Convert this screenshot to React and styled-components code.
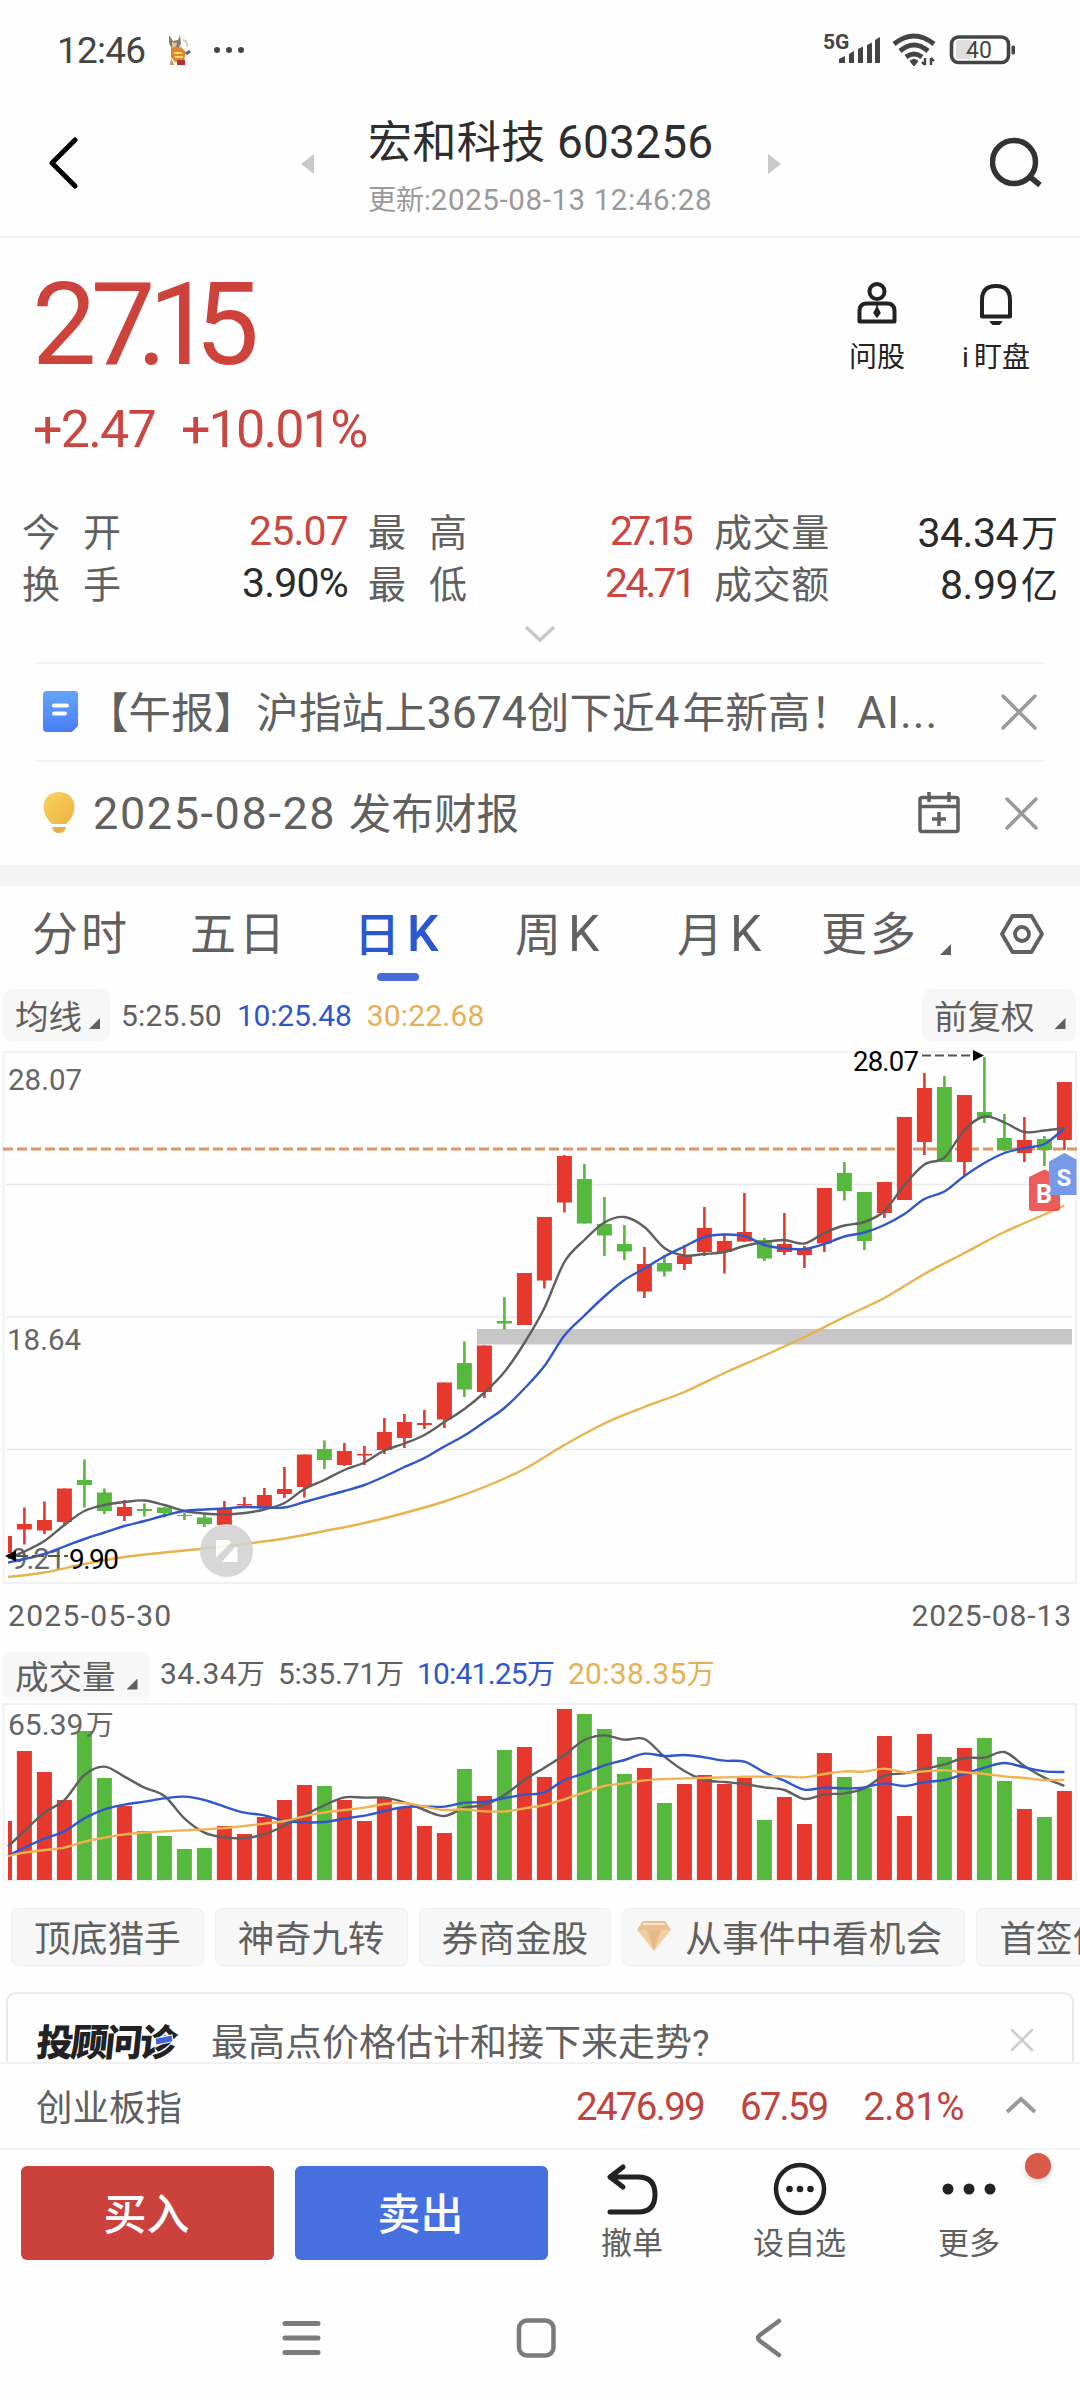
import React from 'react';
import styled, { createGlobalStyle } from 'styled-components';

const RED = '#e6382c';
const GREEN = '#56b83c';

const GlobalStyle = createGlobalStyle`
  * {
    box-sizing: border-box;
  }

  body {
    margin: 0;
    background: #ffffff;
    font-family: Roboto, 'Noto Sans CJK SC', sans-serif;
    color: #606060;
  }

  svg {
    display: block;
    flex: none;
  }
`;

// Layout
const Screen = styled.div`
  width: 1080px;
  height: 2400px;
  background: #fefefe;
  display: flex;
  flex-direction: column;
  overflow: hidden;
  white-space: nowrap;

  > * {
    flex: none;
  }
`;

const Row = styled.div`
  display: flex;
  align-items: center;
`;

const Num = styled.span`
  font-size: ${(p) => p.$size}px;
  letter-spacing: ${(p) => p.$ls || 0}px;
  color: ${(p) => p.$color || 'inherit'};
  margin: 0 ${(p) => p.$after || 0}px 0 ${(p) => p.$before || 0}px;
`;

// Status bar
const StatusBar = styled(Row)`
  height: 100px;
  padding: 0 64px 0 57px;
  justify-content: space-between;
  color: #444444;
`;

const StatusSide = styled(Row)`
  gap: ${(p) => p.$gap}px;
`;

// Title bar
const TitleBar = styled.header`
  height: 138px;
  padding: 0 36px 8px 48px;
  display: flex;
  align-items: center;
  justify-content: space-between;
  border-bottom: 2px solid #f3f3f3;
`;

const TitleCenter = styled(Row)`
  width: 480px;
  margin-left: 12px;
  justify-content: space-between;
`;

const TitleText = styled.div`
  display: flex;
  flex-direction: column;
  width: 346px;
  padding-top: 1px;
`;

const StockName = styled.h1`
  margin: 0;
  font-size: 44px;
  line-height: 60px;
  font-weight: 400;
  letter-spacing: 0.4px;
  color: #2e2e2e;
`;

const Updated = styled.div`
  font-size: 28px;
  line-height: 40px;
  margin-top: 7px;
  margin-bottom: -4px;
  color: #999999;
`;

// Quote
const Quote = styled.section`
  height: 424px;
`;

const QuoteTop = styled.div`
  display: flex;
  justify-content: space-between;
  padding: 0 51px 0 32px;
  height: 262px;
`;

const Price = styled.div`
  font-size: 115px;
  line-height: 120px;
  margin-top: 27px;
  letter-spacing: -6px;
  color: #ce423c;

  span {
    letter-spacing: -18.5px;
  }
`;

const Change = styled.div`
  display: flex;
  gap: 26px;
  margin-top: 15px;
  font-size: 52px;
  line-height: 60px;
  letter-spacing: -1.8px;
  padding-left: 1px;
  color: #c94641;
`;

const QuoteActions = styled.div`
  display: flex;
  gap: 53px;
  padding-top: 43px;
`;

const QuoteAction = styled.div`
  display: flex;
  flex-direction: column;
  align-items: center;
  font-size: 28px;
  line-height: 34px;
  color: #222222;
  width: 66px;

  svg {
    margin-bottom: 16px;
  }

  em {
    font-style: normal;
    margin-right: 5px;
  }
`;

const Stats = styled.div`
  display: grid;
  grid-template-columns: 325px 346px 365px;
  grid-auto-rows: 52px;
  padding: 5px 22px 0;
`;

const Stat = styled.div`
  display: flex;
  justify-content: space-between;
  align-items: center;
  padding-left: ${(p) => p.$indent || 0}px;
`;

const StatLabel = styled.span`
  font-size: 38px;
  padding-bottom: 4px;
  letter-spacing: ${(p) => (p.$spread ? 23 : 0.6)}px;
`;

const StatValue = styled.span`
  font-size: 41px;
  letter-spacing: ${(p) => p.$ls || -0.8}px;
  margin-right: ${(p) => p.$shift || 0}px;
  color: ${(p) => (p.$up ? '#c94641' : '#2b2b2b')};

  small {
    font-size: 37px;
    letter-spacing: 0;
    margin-left: 3px;
  }
`;

const ExpandMark = styled.div`
  display: flex;
  justify-content: center;
  padding-top: 16px;
`;

// Notices
const Notice = styled.div`
  display: flex;
  align-items: center;
  height: ${(p) => p.$h}px;
  margin: 0 36px;
  border-top: 2px solid #f2f2f2;
  padding: 0 ${(p) => p.$right}px ${(p) => p.$bottom || 0}px 7px;
  font-size: 42.6px;
`;

const NoticeText = styled.div`
  flex: 1;
  margin-left: ${(p) => p.$left}px;
  padding-bottom: 5px;
`;

const CalendarIcon = styled.svg`
  margin-right: 44px;
`;

const Band = styled.div`
  height: 21px;
  background: #f4f4f4;
`;

// Period tabs
const Tabs = styled.nav`
  display: flex;
  height: 102px;
  padding: 0 35px 0 32px;
  font-size: 46px;
`;

const Tab = styled.div`
  width: ${(p) => p.$w}px;
  padding-top: 18px;
  line-height: 60px;
  letter-spacing: 3px;
  font-weight: ${(p) => (p.$active ? 500 : 400)};
  color: ${(p) => (p.$active ? '#2b57cf' : '#606060')};

  b {
    font-size: 50px;
    font-weight: inherit;
    margin-left: 4px;
  }

  &::after {
    content: '';
    display: ${(p) => (p.$active ? 'block' : 'none')};
    width: 42px;
    height: 8px;
    margin: 8px 0 0 23px;
    border-radius: 4px;
    background: #476ddb;
  }

  i {
    margin-bottom: -5px;
  }
`;

const Corner = styled.i`
  display: inline-block;
  width: 11px;
  height: 11px;
  margin-left: ${(p) => p.$left}px;
  background: #606060;
  clip-path: polygon(100% 0, 100% 100%, 0 100%);
`;

const TabSettings = styled.div`
  margin-left: auto;
  padding-top: 27px;
`;

// Indicator bars
const IndicatorBar = styled.div`
  display: flex;
  align-items: center;
  height: ${(p) => p.$h}px;
  padding: 0 4px 0 3px;
`;

const Picker = styled.div`
  display: flex;
  align-items: center;
  width: ${(p) => p.$w}px;
  height: ${(p) => p.$h}px;
  padding: 0 0 2px 12px;
  border-radius: 9px;
  background: #f7f7f7;
  font-size: 33.5px;

  i {
    margin-top: 19px;
  }
`;

const Legend = styled.div`
  flex: 1;
  display: flex;
  gap: ${(p) => p.$gap}px;
  margin-left: 11px;
  font-size: 28px;
  padding-bottom: ${(p) => p.$up || 0}px;
`;

const LegendItem = styled.span`
  color: ${(p) => p.$color || 'inherit'};
`;

const Dates = styled.div`
  display: flex;
  justify-content: space-between;
  align-items: center;
  height: 65px;
  padding: 0 8px 2px;
`;

// Feature chips
const Chips = styled.div`
  display: flex;
  gap: 11px;
  padding: 26px 0 0 11px;
  height: 110px;
`;

const Chip = styled.div`
  flex: none;
  display: flex;
  align-items: center;
  height: 58px;
  padding: 0 22px 3px ${(p) => (p.$icon ? 14 : 22)}px;
  border: 1px solid #f0f0f0;
  border-radius: 7px;
  background: #f7f7f7;
  font-size: 36.7px;

  svg {
    margin-right: 14px;
  }
`;

const AdvisorClip = styled.div`
  height: 70px;
  padding: 0 6px;
  overflow: hidden;
`;

const Advisor = styled.div`
  display: flex;
  align-items: center;
  height: 96px;
  padding: 0 38px 0 29px;
  border: 2px solid #e9e9e9;
  border-radius: 10px;
  font-size: 37px;
`;

const AdvisorLogo = styled.span`
  display: inline-block;
  width: 140px;
  margin-right: 34px;
  font-size: 37px;
  font-weight: 900;
  letter-spacing: -2.6px;
  color: #222222;
  transform: skewX(-6deg);
  position: relative;

  &::after {
    content: '';
    position: absolute;
    right: 5px;
    top: 24px;
    width: 16px;
    height: 6px;
    background: #3f63d8;
    box-shadow: 0 0 0 1px #fefefe;
    transform: rotate(-12deg);
  }
`;

const AdvisorText = styled.span`
  flex: 1;
`;

const IndexBar = styled.div`
  display: flex;
  align-items: center;
  height: 88px;
  padding: 0 43px 2px 36px;
  border-top: 2px solid #f1f1f1;
  border-bottom: 2px solid #f5f5f5;
  font-size: 36.5px;
`;

const IndexValues = styled.div`
  margin-left: auto;
  margin-right: 41px;
  padding-top: 2px;
  display: flex;
  gap: 36px;
  color: #bf4440;
`;

// Trade bar
const TradeBar = styled.div`
  display: flex;
  height: 112px;
  padding: 16px 0 0 21px;
`;

const TradeButton = styled.button`
  width: 253px;
  height: 94px;
  margin-right: 21px;
  border: none;
  border-radius: 6px;
  background: ${(p) => p.$bg};
  color: #ffffff;
  font-family: inherit;
  font-size: 43px;
  font-weight: 500;
  padding: 0 2px 5px 0;
`;

const TradeAction = styled.div`
  display: flex;
  flex-direction: column;
  align-items: center;
  width: ${(p) => p.$w}px;
  position: relative;
  font-size: 31px;
  line-height: 36px;

  svg {
    margin: -5px 0 5px;
  }
`;

const Badge = styled.span`
  position: absolute;
  right: -17px;
  top: -13px;
  width: 26px;
  height: 26px;
  border-radius: 50%;
  background: #d85a4a;
  box-shadow: 0 3px 5px rgba(0, 0, 0, 0.15);
`;

const SystemNav = styled.div`
  display: flex;
  align-items: center;
  gap: 194px;
  height: 138px;
  padding: 14px 0 0 281px;
`;

// color, body top, body bottom, high, low (px in the chart's own space)
const candles = [
  ['r', 1536, 1553, 1536, 1553],
  ['r', 1524, 1529.5, 1507.5, 1544.5],
  ['r', 1520, 1530.5, 1501.5, 1534],
  ['r', 1488.5, 1522, 1488.5, 1526],
  ['g', 1480, 1485, 1459.5, 1507.5],
  ['g', 1492.5, 1511, 1488.5, 1514],
  ['r', 1507, 1516, 1500, 1521],
  ['g', 1509, 1511, 1503.5, 1516.5],
  ['g', 1507.5, 1513, 1507, 1517.5],
  ['g', 1515, 1516, 1513, 1520],
  ['g', 1517.5, 1524, 1513, 1527],
  ['r', 1508, 1525, 1501, 1525],
  ['r', 1504, 1505.5, 1497, 1507],
  ['r', 1495, 1507, 1488, 1507],
  ['r', 1489, 1494, 1467, 1498],
  ['r', 1454.5, 1487, 1454.5, 1497.5],
  ['g', 1449, 1460, 1440.5, 1469],
  ['r', 1451, 1465, 1443, 1466],
  ['r', 1454, 1455.5, 1446, 1465],
  ['r', 1432, 1450, 1418, 1454],
  ['r', 1422, 1438, 1414, 1448],
  ['r', 1423, 1425, 1410, 1429],
  ['r', 1382.5, 1419.5, 1382.5, 1428],
  ['g', 1363, 1389.5, 1341.5, 1397],
  ['r', 1345.5, 1392, 1345.5, 1398],
  ['g', 1321, 1323.5, 1297, 1329.5],
  ['r', 1273, 1325, 1273, 1325],
  ['r', 1217, 1280.5, 1217, 1288.5],
  ['r', 1156, 1202.5, 1155, 1212.5],
  ['g', 1179, 1223.5, 1164, 1223.5],
  ['g', 1224, 1235.5, 1197, 1256],
  ['g', 1244, 1251.5, 1225, 1260],
  ['r', 1264, 1291.5, 1247, 1298],
  ['g', 1263, 1271.5, 1255, 1276.5],
  ['r', 1255.5, 1264, 1245, 1270],
  ['r', 1228, 1252, 1207, 1256],
  ['r', 1241, 1252, 1235, 1273.5],
  ['r', 1232, 1241.5, 1193, 1242],
  ['g', 1240, 1258.5, 1238, 1261],
  ['r', 1244, 1252, 1213, 1255],
  ['r', 1248, 1255, 1246, 1268],
  ['r', 1188, 1243.5, 1188, 1252],
  ['g', 1173, 1191, 1162, 1200.5],
  ['g', 1192, 1241, 1192, 1250],
  ['r', 1182, 1213, 1182, 1218],
  ['r', 1117, 1200, 1117, 1200],
  ['r', 1088, 1142, 1073, 1155],
  ['g', 1087, 1162, 1076, 1162],
  ['r', 1095, 1162, 1095, 1176],
  ['g', 1112, 1118, 1057, 1123],
  ['g', 1138, 1150, 1114, 1151],
  ['r', 1140, 1153, 1117, 1162],
  ['g', 1139, 1150, 1136, 1166],
  ['r', 1082, 1140, 1082, 1150],
];

const volumeTops = [
  1821, 1751, 1772, 1800, 1731, 1778, 1806, 1831, 1836, 1849, 1848, 1826, 1834, 1817,
  1800, 1785, 1786, 1800, 1821, 1798, 1808, 1826, 1833, 1769, 1796, 1750, 1747, 1777,
  1709, 1714, 1729, 1774, 1768, 1803, 1784, 1775, 1784, 1778, 1820, 1797, 1824, 1753,
  1777, 1788, 1736, 1816, 1734, 1757, 1748, 1738, 1781, 1809, 1817, 1791,
];

const ma5 = [
  1558, 1551.5, 1541, 1525, 1511, 1505, 1502, 1500.5, 1505, 1511, 1513.5, 1514.5, 1513,
  1509.5, 1503, 1489, 1480, 1470, 1462.5, 1450.5, 1443.5, 1435, 1422, 1409, 1392.5, 1372,
  1343, 1308, 1262, 1240, 1222.5, 1217, 1227, 1248, 1255.5, 1254, 1252, 1246, 1242, 1240,
  1243.5, 1233, 1225.5, 1222, 1211, 1185, 1164.5, 1157.5, 1130, 1116.5, 1122.5, 1132, 1130.5, 1128,
];

const ma10 = [
  1562.5, 1559, 1554, 1546.5, 1539, 1532.5, 1526, 1521, 1515.5, 1511, 1509.5, 1508.5, 1507,
  1507.5, 1507.5, 1502, 1496.5, 1491, 1485, 1476.5, 1467, 1458, 1446.5, 1435.5, 1422, 1408,
  1388.5, 1366, 1335.5, 1315.5, 1296.5, 1280, 1268.5, 1256.5, 1246.5, 1237, 1234.5, 1236, 1245,
  1248.5, 1249, 1244, 1236.5, 1232.5, 1225, 1214, 1199, 1191.5, 1176, 1163, 1153, 1148, 1144, 1128.5,
];

// sampled on every second day, the latest day is appended in the chart
const ma30 = [
  1577, 1572.5, 1564, 1557, 1552.5, 1548.5, 1544, 1538.5, 1531, 1523, 1513, 1501.5, 1487, 1469,
  1445, 1423.5, 1407, 1392, 1373, 1355.5, 1337, 1317, 1298, 1274, 1253, 1232, 1214.5,
];

const vol5 = [
  620, 573, 518, 480, 405, 380, 410, 443, 468, 535, 578, 592, 594, 583, 557, 525, 496, 472, 473,
  473, 487, 510, 528, 503, 495, 465, 420, 383, 345, 300, 286, 299, 297, 350, 393, 420, 426, 432,
  442, 450, 477, 463, 460, 445, 407, 400, 387, 373, 354, 353, 336, 378, 413, 438,
];

const vol10 = [
  648, 623, 596, 574, 535, 508, 494, 485, 475, 470, 480, 500, 518, 526, 543, 547, 546, 536, 527,
  513, 501, 500, 500, 488, 486, 474, 464, 457, 420, 400, 376, 360, 341, 348, 345, 352, 362, 365,
  397, 422, 449, 443, 445, 442, 430, 438, 426, 420, 402, 383, 369, 382, 394, 396,
];

const vol20 = [
  648, 638, 630, 623, 605, 593, 583, 578, 574, 571, 568, 564, 558, 551, 543, 529, 517, 510, 503,
  492, 489, 500, 510, 508, 514, 514, 505, 495, 478, 457, 438, 430, 421, 417, 415, 414, 412, 410,
  410, 409, 412, 402, 394, 395, 386, 397, 394, 391, 397, 402, 409, 414, 420, 420,
];

const xAt = (i) => (i === 0 ? 8 : 4.4 + 20 * i);
const toPoints = (values) => values.map((y, i) => [xAt(i), y]);
const volPoints = (values) => values.map((v, i) => [xAt(i), 1640 + v / 3]);

// Catmull-Rom curve through all the points
const smooth = (pts) => {
  let d = `M${pts[0][0]} ${pts[0][1]}`;
  for (let i = 0; i < pts.length - 1; i += 1) {
    const p0 = pts[i - 1] || pts[i];
    const p1 = pts[i];
    const p2 = pts[i + 1];
    const p3 = pts[i + 2] || p2;
    d += ` C${p1[0] + (p2[0] - p0[0]) / 6} ${p1[1] + (p2[1] - p0[1]) / 6}`;
    d += ` ${p2[0] - (p3[0] - p1[0]) / 6} ${p2[1] - (p3[1] - p1[1]) / 6} ${p2[0]} ${p2[1]}`;
  }
  return d;
};

const Line = styled.path`
  fill: none;
  stroke: ${(p) => p.$color};
  stroke-width: 2.4px;
`;

const ChartText = styled.text`
  font-size: ${(p) => p.$size || 29.5}px;
  letter-spacing: ${(p) => p.$ls || 0}px;
  font-weight: ${(p) => (p.$bold ? 700 : 400)};
  fill: ${(p) => p.$color || '#666666'};
`;

const fill = (c) => (c === 'r' ? RED : GREEN);

const CandleChart = () => {
  const ma30Points = ma30.map((y, i) => [xAt(i * 2), y]).concat([[1064.4, 1205.5]]);
  return (
    <svg width="1080" height="542" viewBox="0 1042 1080 542">
      <rect x="3.5" y="1052" width="1072.5" height="531" fill="none" stroke="#f1f1f1" strokeWidth="2" />
      {[1184.5, 1317, 1449.5].map((y) => (
        <line key={y} x1="6" x2="1072" y1={y} y2={y} stroke="#e9e9e9" strokeWidth="1.4" />
      ))}
      <ChartText x="8" y="1090">28.07</ChartText>
      <ChartText x="7" y="1350">18.64</ChartText>
      <ChartText x="11" y="1569" $ls={-1}>9.21</ChartText>
      <line x1="3" x2="1077" y1="1149" y2="1149" stroke="#dc9468" strokeWidth="3" strokeDasharray="10 4" />
      <rect x="477" y="1329" width="595" height="15.5" fill="#c6c6c6" />
      {candles.map(([c, top, bottom, high, low], i) =>
        i === 0 ? (
          <rect key={i} x="8" y={top} width="4" height={bottom - top} fill={fill(c)} />
        ) : (
          <g key={i} fill={fill(c)}>
            <rect x={xAt(i) - 1.3} y={high} width="2.6" height={low - high} />
            <rect x={xAt(i) - 7.5} y={top} width="15" height={bottom - top} />
          </g>
        )
      )}
      <Line $color="#5f5f5f" d={smooth(toPoints(ma5))} />
      <Line $color="#2f57c9" d={smooth(toPoints(ma10))} />
      <Line $color="#e8b34c" d={smooth(ma30Points)} />
      <path d="M5 1556l11-5.5v11z" fill="#000000" />
      <line x1="16" x2="68" y1="1556" y2="1556" stroke="#555555" strokeWidth="2" strokeDasharray="12 4" />
      <ChartText x="69" y="1569" $size={28} $ls={-1.5} $color="#000000">9.90</ChartText>
      <ChartText x="853" y="1070.5" $size={27.5} $ls={-0.8} $color="#000000">28.07</ChartText>
      <line x1="922" x2="972" y1="1055.5" y2="1055.5" stroke="#555555" strokeWidth="2" strokeDasharray="9 4" />
      <path d="M984 1055.5l-11-5.5v11z" fill="#000000" />
      <g opacity="0.88">
        <circle cx="226.6" cy="1550.5" r="26.5" fill="#d2d2d2" />
        <path d="M216 1540h13l2 2.5-15 15z M237.5 1562v-14l-2-1.5-13.5 15.5z" fill="#ffffff" />
      </g>
      <g opacity="0.88">
        <path d="M1029 1177l15.5-7.5 15.5 7.5v31q0 3-3 3h-25q-3 0-3-3z" fill="#ea4646" />
        <path d="M1049 1161.5l15.5-8.5 12 6.5v35.5h-27.5z" fill="#648ce6" />
      </g>
      <ChartText x="1036" y="1202.5" $size={25} $color="#ffffff" $bold>B</ChartText>
      <ChartText x="1056.5" y="1185.5" $size={24} $color="#ffffff" $bold>S</ChartText>
    </svg>
  );
};

const VolumeChart = () => (
  <svg width="1080" height="180" viewBox="0 1702 1080 180">
    <path d="M3.5 1880V1704H1076V1880z" fill="none" stroke="#f1f1f1" strokeWidth="2" />
    {volumeTops.map((top, i) => (
      <rect
        key={i}
        x={i === 0 ? 8 : xAt(i) - 7.5}
        y={top}
        width={i === 0 ? 4 : 15}
        height={1880 - top}
        fill={fill(candles[i][0])}
      />
    ))}
    <Line $color="#5f5f5f" d={smooth(volPoints(vol5))} />
    <Line $color="#2f57c9" d={smooth(volPoints(vol10))} />
    <Line $color="#f0b350" d={smooth(volPoints(vol20))} />
    <ChartText x="8" y="1735" $size={30}>
      65.39<tspan fontSize="28" dx="2.5">万</tspan>
    </ChartText>
  </svg>
);

const CloseIcon = ({ size, color, width = 3.5 }) => (
  <svg width={size} height={size} viewBox={`0 0 ${size} ${size}`} stroke={color} strokeWidth={width} strokeLinecap="round">
    <path d={`M2 2L${size - 2} ${size - 2}M${size - 2} 2L2 ${size - 2}`} />
  </svg>
);

const App = () => (
  <>
    <GlobalStyle />
    <Screen>
      <StatusBar>
        <StatusSide $gap={21}>
          <Num $size={37} $ls={-0.8}>12:46</Num>
          <svg width="26" height="32" viewBox="0 0 26 32">
            <path d="M3 1l4 6 5-1 2-5 1 9-3 5H6L3 9z" fill="#8b7a68" />
            <path d="M6 8l5 1-1 4-4 1z" fill="#dcc0a0" />
            <path d="M5 14l10-1 5 5-2 9-9 1-4-5z" fill="#dd852f" />
            <path d="M8 19h8M9 23h8" stroke="#f8dc6a" strokeWidth="2" />
            <path d="M11 26h8v5h-8z" fill="#b8322a" />
            <path d="M5 24l3 7H4z" fill="#c69045" />
            <path d="M17 6q5 1 4 7" fill="none" stroke="#d9c9bb" strokeWidth="2" />
            <path d="M20 20l4-3" stroke="#59688a" strokeWidth="3" />
          </svg>
          <svg width="32" height="8" viewBox="0 0 32 8" fill="#444444">
            <circle cx="4" cy="4" r="3" />
            <circle cx="16" cy="4" r="3" />
            <circle cx="28" cy="4" r="3" />
          </svg>
        </StatusSide>
        <svg width="194" height="40" viewBox="822 30 194 40">
          <text x="823" y="48.5" fontSize="21" fontWeight="700" fill="#444444">5G</text>
          <g fill="#444444">
            <path d="M839 63v-4l6-3v7z M849 63v-9l5-3v12z M858 63v-14l5-2.5v16.5z M867 63v-18l5-2.5v20.5z M875 63v-23l5-3v26z" />
          </g>
          <g fill="none" stroke="#444444" strokeWidth="5">
            <path d="M894 44q20-16 40 0" />
            <path d="M900 51q14-12 28 0" />
            <path d="M906 57q8-6 16 0" />
          </g>
          <path d="M914 59l4 2-4 5-4-5z" fill="#444444" stroke="#444444" />
          <path d="M925 65v-7m0 7l-3-3M931 58v7m0-7l3 3" stroke="#444444" strokeWidth="2.4" />
          <rect x="951.5" y="37" width="57" height="25.5" rx="7" fill="none" stroke="#444444" strokeWidth="3.6" />
          <rect x="956" y="40" width="16" height="19" rx="3" fill="#dedede" />
          <rect x="1011.5" y="45.5" width="3.5" height="9" rx="1.5" fill="#444444" />
          <text x="966" y="57.5" fontSize="23" fill="#444444">40</text>
        </svg>
      </StatusBar>

      <TitleBar>
        <svg width="32" height="54" viewBox="0 1 32 54" fill="none" stroke="#000000" strokeWidth="5" strokeLinecap="round" strokeLinejoin="round">
          <path d="M27 4L4 27L27 50" />
        </svg>
        <TitleCenter>
          <svg width="14" height="20" viewBox="0 0 14 20" fill="#c9c9c9">
            <path d="M13 0v20L0 10z" />
          </svg>
          <TitleText>
            <StockName>
              宏和科技 <Num $size={46} $ls={0.2}>603256</Num>
            </StockName>
            <Updated>
              更新:<Num $size={29.5} $ls={0.6}>2025-08-13 12:46:28</Num>
            </Updated>
          </TitleText>
          <svg width="14" height="20" viewBox="0 0 14 20" fill="#c9c9c9">
            <path d="M1 0v20L14 10z" />
          </svg>
        </TitleCenter>
        <svg width="54" height="54" viewBox="0 0 54 54" fill="none" stroke="#333333" strokeWidth="5.5">
          <circle cx="24" cy="25" r="21.5" />
          <path d="M40 40l10 8" />
        </svg>
      </TitleBar>

      <Quote>
        <QuoteTop>
          <div>
            <Price>
              2<span>7.1</span>5
            </Price>
            <Change>
              <span>+2.47</span>
              <span>+10.01%</span>
            </Change>
          </div>
          <QuoteActions>
            <QuoteAction>
              <svg width="42" height="44" viewBox="0 0 42 44" fill="none" stroke="#222222" strokeWidth="4">
                <circle cx="21" cy="10.5" r="7.5" />
                <path d="M3.5 40.5V30q0-7.5 7.5-7.5h20q7.5 0 7.5 7.5v10.5z" strokeLinejoin="round" />
                <path d="M21 22v4l3 6-3 4-3-4 3-6" fill="#222222" strokeWidth="1.5" />
              </svg>
              问股
            </QuoteAction>
            <QuoteAction>
              <svg width="42" height="44" viewBox="0 0 42 44" fill="none" stroke="#222222" strokeWidth="4">
                <path d="M7 35.5V19Q7 5 21 5t14 14v16.5z" strokeLinejoin="round" />
                <path d="M14.5 40h13q-2 5-6.5 5t-6.5-5z" fill="#222222" stroke="none" />
              </svg>
              <span>
                <em>i</em>盯盘
              </span>
            </QuoteAction>
          </QuoteActions>
        </QuoteTop>

        <Stats>
          <Stat>
            <StatLabel $spread>今开</StatLabel>
            <StatValue $up $shift={-1}>25.07</StatValue>
          </Stat>
          <Stat $indent={21}>
            <StatLabel $spread>最高</StatLabel>
            <StatValue $up $ls={-4.8} $shift={4}>27.15</StatValue>
          </Stat>
          <Stat $indent={21}>
            <StatLabel>成交量</StatLabel>
            <StatValue $ls={-0.5}>34.34<small>万</small></StatValue>
          </Stat>
          <Stat>
            <StatLabel $spread>换手</StatLabel>
            <StatValue $shift={-1}>3.90%</StatValue>
          </Stat>
          <Stat $indent={21}>
            <StatLabel $spread>最低</StatLabel>
            <StatValue $up $ls={-2.8} $shift={-1}>24.71</StatValue>
          </Stat>
          <Stat $indent={21}>
            <StatLabel>成交额</StatLabel>
            <StatValue $ls={-0.5}>8.99<small>亿</small></StatValue>
          </Stat>
        </Stats>
        <ExpandMark>
          <svg width="32" height="18" viewBox="0 0 32 18" fill="none" stroke="#c8c8c8" strokeWidth="3.5">
            <path d="M2 2l14 13L30 2" />
          </svg>
        </ExpandMark>
      </Quote>

      <Notice $h={98} $right={7}>
        <svg width="36" height="42" viewBox="0 0 36 42">
          <defs>
            <linearGradient id="doc" x1="0" y1="0" x2="0" y2="1">
              <stop offset="0" stopColor="#64a5fb" />
              <stop offset="1" stopColor="#4a7df5" />
            </linearGradient>
          </defs>
          <path d="M4 0h28q3 0 3 3v32l-6 6H4q-4 0-4-4V3q0-3 4-3z" fill="url(#doc)" />
          <path d="M11 14.5h13M11 22.5h11" stroke="#ffffff" strokeWidth="4" strokeLinecap="round" />
        </svg>
        <NoticeText $left={7}>
          【午报】沪指站上<Num $size={44.5}>3674</Num>创下近<Num $size={44.5} $ls={3}>4</Num>年新高！
          <Num $size={44.5} $ls={1} $before={4}>AI...</Num>
        </NoticeText>
        <CloseIcon size={36} color="#999999" />
      </Notice>
      <Notice $h={105} $right={6} $bottom={1}>
        <svg width="32" height="42" viewBox="0 0 32 42">
          <defs>
            <linearGradient id="bulb" x1="0" y1="0" x2="1" y2="1">
              <stop offset="0" stopColor="#f7d366" />
              <stop offset="1" stopColor="#efb23c" />
            </linearGradient>
          </defs>
          <path d="M16 0q15 1 15.5 15 0 9-8.5 17H9Q.5 24 .5 15 1 1 16 0z" fill="url(#bulb)" />
          <path d="M9 35h14q-1 6-7 6t-7-6z" fill="#e3b04a" />
        </svg>
        <NoticeText $left={18}>
          <Num $size={45} $ls={1.6} $after={2}>2025-08-28</Num> 发布财报
        </NoticeText>
        <CalendarIcon width="44" height="42" viewBox="0 0 44 42" fill="none" stroke="#606060" strokeWidth="3.5">
          <rect x="3" y="5.5" width="38" height="34" rx="2" />
          <path d="M3 14.5h38M12 0v10M32 0v10M22 20v14M15 27h14" />
        </CalendarIcon>
        <CloseIcon size={33} color="#999999" />
      </Notice>
      <Band />

      <Tabs>
        <Tab $w={158}>分时</Tab>
        <Tab $w={164}>五日</Tab>
        <Tab $w={161} $active>
          日<b>K</b>
        </Tab>
        <Tab $w={162}>
          周<b>K</b>
        </Tab>
        <Tab $w={144}>
          月<b>K</b>
        </Tab>
        <Tab $w={140}>
          更多
          <Corner $left={21} />
        </Tab>
        <TabSettings>
          <svg width="46" height="42" viewBox="0 0 46 42" fill="none" stroke="#606060" strokeWidth="3.8" strokeLinejoin="round">
            <path d="M13.5 3h19L43 21 32.5 39h-19L3 21z" />
            <circle cx="23" cy="21" r="7" />
          </svg>
        </TabSettings>
      </Tabs>

      <IndicatorBar $h={54}>
        <Picker $w={107} $h={52}>
          均线
          <Corner $left={7} />
        </Picker>
        <Legend $gap={15}>
          <Num $size={30} $ls={0.2}>5:25.50</Num>
          <Num $size={30} $ls={-0.2} $color="#2f57c9">10:25.48</Num>
          <Num $size={30} $ls={0.2} $color="#e6b054">30:22.68</Num>
        </Legend>
        <Picker $w={154} $h={52}>
          前复权
          <Corner $left={20} />
        </Picker>
      </IndicatorBar>

      <CandleChart />
      <Dates>
        <Num $size={30} $ls={1.3}>2025-05-30</Num>
        <Num $size={30} $ls={0.9}>2025-08-13</Num>
      </Dates>

      <IndicatorBar $h={53}>
        <Picker $w={146} $h={48}>
          成交量
          <Corner $left={11} />
        </Picker>
        <Legend $gap={13} $up={8}>
          <LegendItem><Num $size={30} $ls={0.3}>34.34</Num>万</LegendItem>
          <LegendItem><Num $size={30} $ls={-0.2}>5:35.71</Num>万</LegendItem>
          <LegendItem $color="#2f57c9"><Num $size={30} $ls={-0.8}>10:41.25</Num>万</LegendItem>
          <LegendItem $color="#e6b054"><Num $size={30} $ls={0.3}>20:38.35</Num>万</LegendItem>
        </Legend>
      </IndicatorBar>
      <VolumeChart />

      <Chips>
        <Chip>顶底猎手</Chip>
        <Chip>神奇九转</Chip>
        <Chip>券商金股</Chip>
        <Chip $icon>
          <svg width="34" height="30" viewBox="0 0 34 30">
            <path d="M6 0h22l6 9-17 21L0 9z" fill="#f0cfa4" />
            <path d="M6 0h22l6 9H0z" fill="#e9c093" />
            <path d="M10 9h14l-7 21z" fill="#e6bb8a" />
            <path d="M6 3h22" stroke="#f7e3c8" strokeWidth="2" />
          </svg>
          从事件中看机会
        </Chip>
        <Chip>首签价值</Chip>
      </Chips>

      <AdvisorClip>
        <Advisor>
          <AdvisorLogo>投顾问诊</AdvisorLogo>
          <AdvisorText>最高点价格估计和接下来走势?</AdvisorText>
          <CloseIcon size={24} color="#cccccc" width={2.5} />
        </Advisor>
      </AdvisorClip>

      <IndexBar>
        创业板指
        <IndexValues>
          <Num $size={38.5} $ls={-1.7}>2476.99</Num>
          <Num $size={38.5} $ls={-1.9}>67.59</Num>
          <Num $size={38.5} $ls={-0.5}>2.81%</Num>
        </IndexValues>
        <svg width="32" height="20" viewBox="0 0 32 20" fill="none" stroke="#999999" strokeWidth="4">
          <path d="M2 17L16 4l14 13" />
        </svg>
      </IndexBar>

      <TradeBar>
        <TradeButton $bg="#cb423d">买入</TradeButton>
        <TradeButton $bg="#466fe0">卖出</TradeButton>
        <TradeAction $w={126}>
          <svg width="54" height="60" viewBox="0 1 54 60" fill="none" stroke="#222222" strokeWidth="5" strokeLinecap="round" strokeLinejoin="round">
            <path d="M18 7L5 17l13 10M5 17h28q17 0 17 17.5t-17 17.5H5" />
          </svg>
          撤单
        </TradeAction>
        <TradeAction $w={209}>
          <svg width="54" height="60" viewBox="0 0 54 60">
            <circle cx="27" cy="28" r="24" fill="none" stroke="#222222" strokeWidth="4.5" />
            <g fill="#222222">
              <circle cx="16.5" cy="28" r="3.3" />
              <circle cx="27" cy="28" r="3.3" />
              <circle cx="37.5" cy="28" r="3.3" />
            </g>
          </svg>
          设自选
        </TradeAction>
        <TradeAction $w={130}>
          <svg width="54" height="60" viewBox="0 0 54 60" fill="#222222">
            <circle cx="6" cy="28" r="5.5" />
            <circle cx="27" cy="28" r="5.5" />
            <circle cx="48" cy="28" r="5.5" />
          </svg>
          更多
          <Badge />
        </TradeAction>
      </TradeBar>

      <SystemNav>
        <svg width="41" height="42" viewBox="0 0 41 42" stroke="#7b7b7b" strokeWidth="5" strokeLinecap="round">
          <path d="M4 6.5h33M4 21h33M4 35.5h33" />
        </svg>
        <svg width="42" height="42" viewBox="0 0 42 42" fill="none" stroke="#7b7b7b" strokeWidth="4.5">
          <rect x="3" y="3.5" width="34.5" height="35" rx="8" />
        </svg>
        <svg width="30" height="42" viewBox="0 0 30 42" fill="none" stroke="#7b7b7b" strokeWidth="4.5" strokeLinecap="round" strokeLinejoin="round">
          <path d="M27 4L8 18q-4 3 0 6l19 14" />
        </svg>
      </SystemNav>
    </Screen>
  </>
);

export default App;
